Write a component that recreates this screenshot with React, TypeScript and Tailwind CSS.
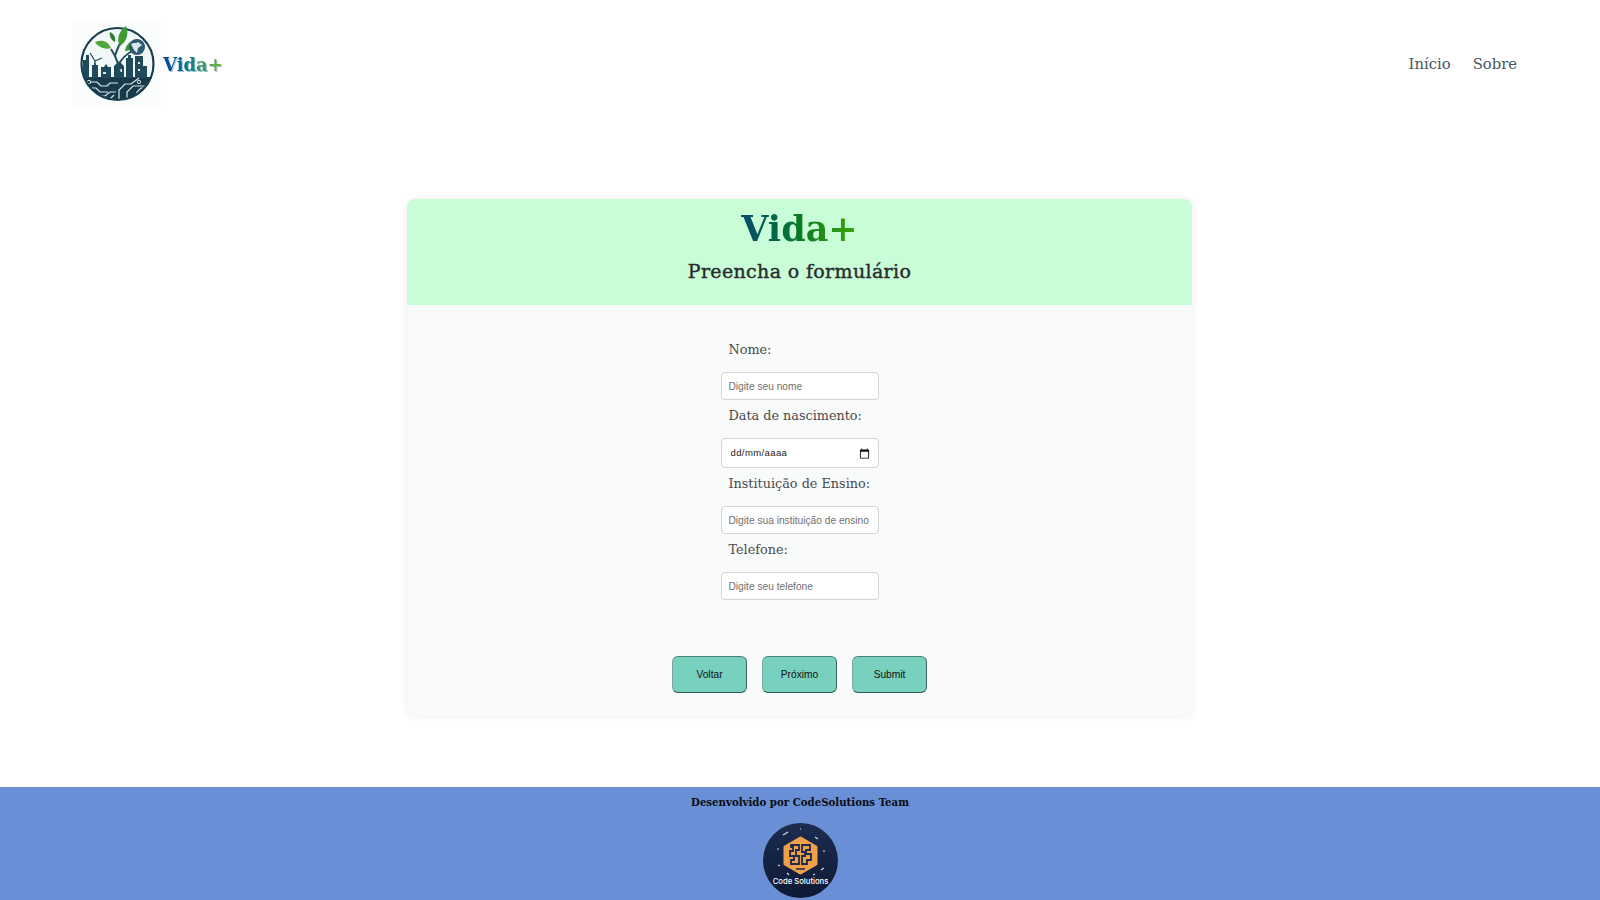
const serif = { fontFamily: '"DejaVu Serif", serif' };
const sans = { fontFamily: '"Liberation Sans", sans-serif' };

function SiteLogo() {
  return (
    <svg width="88" height="88" viewBox="0 0 88 88">
      <defs>
        <clipPath id="disc">
          <circle cx="44.5" cy="44" r="36" />
        </clipPath>
      </defs>
      <rect width="88" height="88" fill="#fbfcfc" />
      <circle cx="44.5" cy="44" r="36" fill="#f2f7f7" />
      <g clipPath="url(#disc)">
        <rect x="0" y="57" width="88" height="30" fill="#17394a" />
        {/* skyline */}
        <path d="M10 58V40h3v-5h3v23h3V45h2l1-4 1 4h2v13h3V47h3l2-3 2 3h3v11h3V46l5-5 5 5v12h2V38h2v-3h3v3h2v20h2V36h8v10h4v12z" fill="#1e4a5c" />
        <path d="M22 41l-5-8M22 41l7-3M22 41l-1 9" stroke="#1e4a5c" strokeWidth="1.2" />
        <path d="M30 52h3v2h-3zM46 49h3v3h-3zM60 42h2v2h-2zM65 42h2v2h-2zM65 49h2v2h-2zM60 49h2v2h-2z" fill="#dfeaec" />
        {/* circuit traces */}
        <path d="M16 62h8l4 4h6l3-3h8M13 68h10l4 4h8M22 76h10l5-4h6M46 80V70l6-6h6l8-6M54 82V72l6-6h14M64 78v-6l4-4h8M36 80l5-5" stroke="#dce8ea" strokeWidth="1.2" fill="none" />
        <circle cx="16" cy="62" r="1.7" fill="#17394a" stroke="#dce8ea" />
        <circle cx="13" cy="68" r="1.7" fill="#17394a" stroke="#dce8ea" />
        <circle cx="22" cy="76" r="1.7" fill="#17394a" stroke="#dce8ea" />
        <circle cx="36" cy="80" r="1.7" fill="#17394a" stroke="#dce8ea" />
        <circle cx="64" cy="78" r="1.7" fill="#17394a" stroke="#dce8ea" />
        <circle cx="76" cy="68" r="1.7" fill="#17394a" stroke="#dce8ea" />
        <circle cx="66" cy="62" r="1.7" fill="#17394a" stroke="#dce8ea" />
      </g>
      <circle cx="44.5" cy="44" r="36" fill="none" stroke="#17404f" strokeWidth="2.2" />
      {/* tree */}
      <path d="M47 58C47 46 44 38 38 29M46 44c3-6 8-10 13-13M42 36c1-4 3-8 5-13" stroke="#254f58" strokeWidth="2" fill="none" />
      <path d="M47 26c-4-7-1-15 6-20 3 8 1 15-6 20z" fill="#3f9a34" />
      <path d="M38 28c-6 2-13-1-16-6 7-3 13-1 16 6z" fill="#4fa83a" />
      <path d="M52 31c1-7 6-11 13-12-1 7-6 12-13 12z" fill="#3a9232" />
      <path d="M42 22c-4-2-6-6-5-10 4 2 6 5 5 10z" fill="#2f7f2d" />
      <circle cx="64" cy="27" r="8" fill="#2e5a74" />
      <path d="M58 24c3-2 5 0 7-2l4 3-4 3-1 5-3-3z" fill="#dbe7ea" />
    </svg>
  );
}

function TeamLogo() {
  return (
    <svg width="75" height="75" viewBox="0 0 75 75">
      <defs>
        <linearGradient id="navy" x1="0" y1="0" x2="0" y2="1">
          <stop offset="0" stopColor="#1d2c50" />
          <stop offset="1" stopColor="#0d1a35" />
        </linearGradient>
      </defs>
      <circle cx="37.5" cy="37.5" r="37.5" fill="url(#navy)" />
      <path d="M37.5 15 L53 24 V41 L37.5 50 L22 41 V24 Z" fill="#f0a04b" stroke="#f0a04b" strokeWidth="3" strokeLinejoin="round" />
      <path d="M28 22h8v5h-3v6h3v8h-8v-4h3v-4h-4v-5h3v-4h-2zM39 22h8v5h-4v4h5v6h-4v4h-5v-8h3v-4h-3z" fill="none" stroke="#1b2a4d" strokeWidth="1.8" />
      <path d="M33 46h9" stroke="#1b2a4d" strokeWidth="1.5" />
      <path d="M20 12l5-3M52 14l3 2M14 26h2M60 28h2M15 42l2 1M58 47l3-2M37 6h1M24 50l2 2M50 52l2-1" stroke="#d8dde8" strokeWidth="1.1" />
      <text x="37.5" y="61" textAnchor="middle" fill="#fff" fontSize="7.7" fontWeight="500" fontFamily="Inter, sans-serif">Code Solutions</text>
    </svg>
  );
}

function FieldLabel({ children }: { children: string }) {
  return (
    <label className="pl-2 h-[30px] -mt-[1px] mb-[1px] text-[12.8px] leading-[18px] text-[#4a4a4a]" style={serif}>
      {children}
    </label>
  );
}

function Field({ label, placeholder }: { label: string; placeholder: string }) {
  return (
    <div className="flex flex-col">
      <FieldLabel>{label}</FieldLabel>
      <input
        placeholder={placeholder}
        className="w-[158px] h-[28px] px-[7px] rounded-[4px] border border-[#d4d4d4] bg-white text-[10.2px] placeholder:text-[#707070] outline-none"
        style={sans}
      />
    </div>
  );
}

function Btn({ children }: { children: string }) {
  return (
    <button
      className="w-[75px] h-[37px] rounded-[6px] bg-[#78d0bf] border border-[#7aa8a0] border-r-[#3c6a62] border-b-[#2f5a54] border-t-[#4d7f76] text-[10.2px] text-[#111]"
      style={sans}
    >
      {children}
    </button>
  );
}

export default function App() {
  return (
    <div className="min-h-[900px] flex flex-col bg-white">
      <header className="h-[128px] pl-[73px] pr-[83px] flex items-center justify-between">
        <div className="flex items-center">
          <SiteLogo />
          <span
            className="ml-[2px] text-[18px] font-bold bg-gradient-to-r from-[#123f9a] via-[#0f8a7a] to-[#7ab81e] bg-clip-text text-transparent drop-shadow-[1px_1px_0px_rgba(0,70,150,0.35)]"
            style={serif}
          >
            Vida+
          </span>
        </div>
        <nav className="flex gap-[22px] text-[14.8px] text-[#4a5560]" style={serif}>
          <a>Início</a>
          <a>Sobre</a>
        </nav>
      </header>

      <main className="flex-1 pt-[71px] flex justify-center">
        <section className="w-[785px] mr-[1px] h-[517px] rounded-lg bg-[#f8fbfa] shadow-[0_0_8px_rgba(0,0,0,0.08)] overflow-hidden flex flex-col">
          <div className="h-[106px] bg-[#c8fdd8] flex flex-col items-center pt-[8px]">
            <h1
              className="text-[35px] leading-[44px] font-bold bg-gradient-to-r from-[#0b4a66] via-[#0a7a20] to-[#3aa800] bg-clip-text text-transparent"
              style={serif}
            >
              Vida+
            </h1>
            <h2 className="mt-[8px] text-[19px] leading-6 tracking-[0.35px] text-[#2b2b2b] [-webkit-text-stroke:0.4px_#2b2b2b]" style={serif}>
              Preencha o formulário
            </h2>
          </div>
          <div className="flex-1 flex flex-col items-center pt-[37px]">
            <div className="flex flex-col gap-[8px]">
              <Field label="Nome:" placeholder="Digite seu nome" />
              <div className="flex flex-col">
                <FieldLabel>Data de nascimento:</FieldLabel>
                <div
                  className="w-[158px] h-[30px] pl-[9px] pr-[8px] rounded-[4px] border border-[#d4d4d4] bg-white flex items-center justify-between text-[9.5px] text-[#222]"
                  style={sans}
                >
                  <span className="pt-[1px] tracking-[0.4px]">dd/mm/aaaa</span>
                  <svg width="11" height="11" viewBox="0 0 24 24" fill="#111">
                    <path d="M20 3h-1V1h-2v2H7V1H5v2H4c-1.1 0-2 .9-2 2v16c0 1.1.9 2 2 2h16c1.1 0 2-.9 2-2V5c0-1.1-.9-2-2-2zm0 18H4V8h16v13z" />
                  </svg>
                </div>
              </div>
              <Field label="Instituição de Ensino:" placeholder="Digite sua instituição de ensino" />
              <Field label="Telefone:" placeholder="Digite seu telefone" />
            </div>
            <div className="mt-[56px] flex gap-[15px]">
              <Btn>Voltar</Btn>
              <Btn>Próximo</Btn>
              <Btn>Submit</Btn>
            </div>
          </div>
        </section>
      </main>

      <footer className="h-[113px] bg-[#6990d6] flex flex-col items-center pt-[7px]">
        <p className="text-[10.2px] leading-[16px] font-bold text-[#0c0c14]" style={serif}>
          Desenvolvido por CodeSolutions Team
        </p>
        <div className="mt-[13px]">
          <TeamLogo />
        </div>
      </footer>
    </div>
  );
}
